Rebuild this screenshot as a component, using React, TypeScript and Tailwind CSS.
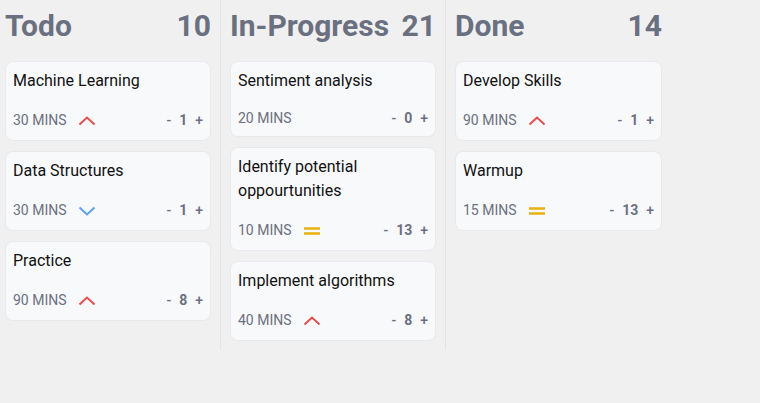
import type { ReactNode } from "react";

type Priority = "high" | "low" | "medium" | null;

type Task = {
  title: string;
  mins: number;
  priority: Priority;
  count: number;
};

type Column = {
  name: string;
  total: number;
  tasks: Task[];
};

const columns: Column[] = [
  {
    name: "Todo",
    total: 10,
    tasks: [
      { title: "Machine Learning", mins: 30, priority: "high", count: 1 },
      { title: "Data Structures", mins: 30, priority: "low", count: 1 },
      { title: "Practice", mins: 90, priority: "high", count: 8 },
    ],
  },
  {
    name: "In-Progress",
    total: 21,
    tasks: [
      { title: "Sentiment analysis", mins: 20, priority: null, count: 0 },
      { title: "Identify potential oppourtunities", mins: 10, priority: "medium", count: 13 },
      { title: "Implement algorithms", mins: 40, priority: "high", count: 8 },
    ],
  },
  {
    name: "Done",
    total: 14,
    tasks: [
      { title: "Develop Skills", mins: 90, priority: "high", count: 1 },
      { title: "Warmup", mins: 15, priority: "medium", count: 13 },
    ],
  },
];

function PriorityIcon({ priority }: { priority: Priority }) {
  if (priority === "high") {
    return (
      <svg width="18" height="24" viewBox="0 0 18 24" fill="none" className="ml-[11px]">
        <path d="M1.5 16.5 L9 9.5 L16.5 16.5" stroke="#f04a4a" strokeWidth="2" />
      </svg>
    );
  }
  if (priority === "low") {
    return (
      <svg width="18" height="24" viewBox="0 0 18 24" fill="none" className="ml-[11px]">
        <path d="M1.5 9.5 L9 16.5 L16.5 9.5" stroke="#5aa2f5" strokeWidth="2" />
      </svg>
    );
  }
  if (priority === "medium") {
    return (
      <svg width="18" height="24" viewBox="0 0 18 24" fill="none" className="ml-[11px]">
        <path d="M1 10.5 H17 M1 15.5 H17" stroke="#e8b10e" strokeWidth="2.4" />
      </svg>
    );
  }
  return null;
}

function Card({ task }: { task: Task }) {
  return (
    <div className="rounded-lg border border-[#e8e9ec] bg-[#f8f9fb] px-[7px] pt-[7px] pb-[8px]">
      <div className="text-base leading-6 text-[#111]">{task.title}</div>
      <div className="mt-[15px] flex items-center">
        <span className="text-sm leading-5 text-[#6b7080]">{task.mins} MINS</span>
        <PriorityIcon priority={task.priority} />
        <div className="ml-auto flex items-center gap-[8px] text-sm font-bold leading-5 text-[#6b7080]">
          <span className="font-medium">-</span>
          <span>{task.count}</span>
          <span className="font-medium">+</span>
        </div>
      </div>
    </div>
  );
}

function Lane({ column, first, last, children }: { column: Column; first: boolean; last: boolean; children: ReactNode }) {
  return (
    <div
      className={`flex shrink-0 flex-col pb-[9px] ${first ? "w-[221px] pl-[5px] pr-[9px]" : "w-[225px] px-[9px]"} ${
        last ? "" : "border-r border-[#e4e4e4]"
      }`}
    >
      <div className="mb-[17px] flex h-[44px] items-start justify-between pt-[8px] text-[30px] font-bold leading-[36px] text-[#6b7080]">
        <span>{column.name}</span>
        <span>{column.total}</span>
      </div>
      <div className="flex flex-col gap-[10px]">{children}</div>
    </div>
  );
}

export default function App() {
  return (
    <div
      className="h-[403px] w-[760px] overflow-hidden bg-[#f0f0f0]"
      style={{ fontFamily: "Roboto, 'Noto Sans', sans-serif" }}
    >
      <div className="flex items-stretch">
        {columns.map((column, i) => (
          <Lane key={column.name} column={column} first={i === 0} last={i === columns.length - 1}>
            {column.tasks.map((task) => (
              <Card key={task.title} task={task} />
            ))}
          </Lane>
        ))}
      </div>
    </div>
  );
}
